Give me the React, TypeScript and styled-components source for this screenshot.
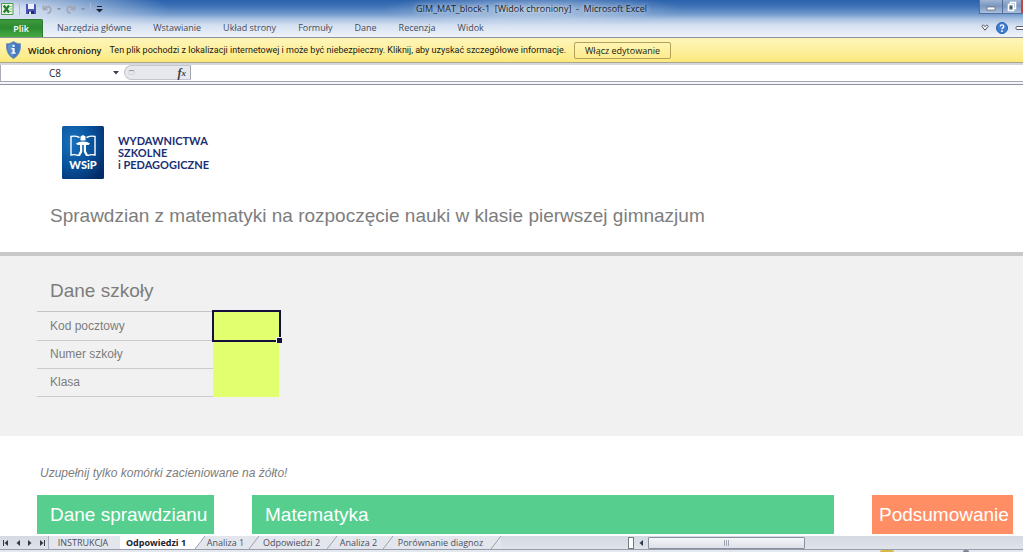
import React from "react";
import styled, { createGlobalStyle } from "styled-components";

const GlobalStyle = createGlobalStyle`
  * { box-sizing: border-box; }
  body { margin: 0; background: #fff; }
  button, input { font: inherit; color: inherit; margin: 0; }
  button { cursor: pointer; }
`;

const uiFont = `"Open Sans", "Noto Sans", sans-serif`;
const messageFont = `Roboto, "Noto Sans", sans-serif`;
const sheetFont = `"Liberation Sans", Arial, sans-serif`;

const Window = styled.div`
  display: flex;
  flex-direction: column;
  min-height: 100vh;
  overflow: hidden;
  font-family: ${uiFont};
  font-size: 9px;
  color: #1e1e28;
`;

/* Window frame */
const Frame = styled.header`
  background:
    radial-gradient(ellipse 150px 16px at 52% 9px, rgba(255, 255, 255, 0.5), rgba(255, 255, 255, 0)),
    radial-gradient(ellipse 170px 30px at 0 10px, rgba(240, 244, 250, 0.95), rgba(240, 244, 250, 0)),
    linear-gradient(#2b62ad 0, #3d71b5 6px, #7098cb 14px, #a9c1e2 19px, #d3dff0 25px, #edf2f9 36px);
  border-bottom: 1px solid #8d919c;
`;
const TitleBar = styled.div`
  display: grid;
  grid-template-columns: 1fr auto 1fr;
  height: 18px;
`;
const QuickAccess = styled.div`
  display: flex;
  align-items: center;
  gap: 5px;
  padding-left: 1px;
`;
const IconButton = styled.button`
  display: flex;
  align-items: center;
  justify-content: center;
  flex: none;
  padding: 0;
  border: 0;
  background: none;
`;
const Separator = styled.span`
  width: 1px;
  height: 12px;
  background: #a9bad2;
`;
const DocumentTitle = styled.h1`
  margin: 0;
  padding-left: 40px;
  font-size: 9px;
  font-weight: 400;
  line-height: 18px;
  white-space: pre;
  text-shadow: 0 0 5px #fff;
`;
const WindowButtons = styled.div`
  display: flex;
  justify-content: flex-end;
  height: 14px;
`;
const WindowButton = styled(IconButton)<{ $width: number; $close?: boolean }>`
  width: ${(p) => p.$width}px;
  height: 14px;
  border: 1px solid #526f9b;
  border-top: 0;
  border-right: 0;
  background: ${(p) => (p.$close ? "#c1453e" : "linear-gradient(#9fb5d3, #7b97be 45%, #a9bfdc)")};
`;
const RibbonTabs = styled.nav`
  display: flex;
  align-items: center;
  height: 19px;
  color: #454b58;
`;
const FileTab = styled.button`
  width: 43px;
  height: 18px;
  margin-right: 14px;
  align-self: flex-end;
  padding: 0;
  border: 1px solid #2c7a30;
  border-left: 0;
  border-bottom: 0;
  border-radius: 0 2px 0 0;
  background: linear-gradient(#3f9a3c, #2c8a31 45%, #46ab42);
  color: #fff;
  font-weight: 600;
`;
const RibbonTab = styled.button`
  padding: 0;
  margin-right: 22px;
  border: 0;
  background: none;
  line-height: 18px;
  white-space: nowrap;
`;
const RibbonTools = styled.div`
  display: flex;
  align-items: center;
  gap: 7px;
  margin-left: auto;
`;

/* Protected view message */
const MessageBar = styled.section`
  display: flex;
  align-items: center;
  height: 25px;
  padding-left: 6px;
  background: linear-gradient(#fff5b8, #fdf0a0 50%, #fbe97c);
  border-bottom: 1px solid #a9a68c;
  color: #1c1a10;
  white-space: nowrap;
`;
const MessageTitle = styled.strong`
  margin: 0 8px 0 7px;
  font-weight: 600;
`;
const MessageText = styled.span`
  font-family: ${messageFont};
`;
const EnableButton = styled.button`
  width: 97px;
  height: 17px;
  margin-left: 8px;
  padding: 0;
  border: 1px solid #b5a05a;
  border-radius: 2px;
  background: linear-gradient(#fff4b4, #fcec8d);
`;

/* Formula bar */
const FormulaBar = styled.section`
  display: flex;
  height: 22px;
  padding: 2px 0 3px;
  border-bottom: 1px solid #8e929c;
  background: linear-gradient(#d5d7dc 0 2px, #fff 2px 18px, #a3a7b0 18px 19px, #f4f5f7 19px);
`;
const NameBox = styled.div`
  display: flex;
  align-items: center;
  width: 124px;
  border-left: 1px solid #a9adb5;
`;
const NameInput = styled.input`
  width: 108px;
  padding: 0;
  border: 0;
  outline: 0;
  background: none;
  font-size: 10px;
  text-align: center;
`;
const NameList = styled(IconButton)`
  margin-left: 4px;
`;
const FunctionArea = styled.div`
  display: flex;
  align-items: center;
  justify-content: space-between;
  width: 67px;
  margin-bottom: 1px;
  padding: 0 4px 0 3px;
  border: 1px solid #c3c7cf;
  border-right-color: #9fa4ad;
  border-radius: 8px 0 0 8px;
  background: #e6e8ed;
`;
const Grip = styled.span`
  width: 7px;
  height: 5px;
  border: 1px solid #d4d7dd;
  border-top-color: #8f949e;
  border-radius: 3px;
`;
const FunctionButton = styled(IconButton)`
  font-family: "Liberation Serif", serif;
  font-size: 12px;
  font-style: italic;
  font-weight: 700;
  line-height: 12px;
  color: #3a3d46;
`;
const FunctionSub = styled.span`
  font-size: 9px;
`;
const FormulaInput = styled.input`
  flex: 1;
  min-width: 0;
  padding: 0 4px;
  border: 0;
  outline: 0;
  background: none;
`;

/* Worksheet */
const Sheet = styled.main`
  flex: 1;
  background: #fff;
  font-family: ${sheetFont};
  color: #7d7d7d;
`;
const Masthead = styled.section`
  padding: 41px 50px 0;
  height: 171px;
  border-bottom: 4px solid #c9c9c9;
`;
const Brand = styled.div`
  display: flex;
  align-items: center;
  gap: 14px;
  height: 53px;
  padding-left: 12px;
`;
const BrandName = styled.p`
  margin: 0;
  font-family: Lato, sans-serif;
  font-size: 11px;
  font-weight: 700;
  line-height: 12px;
  color: #1b2f73;
`;
const SheetTitle = styled.h2`
  margin: 26px 0 0;
  font-size: 19px;
  font-weight: 400;
  line-height: 22px;
`;
const SchoolSection = styled.section`
  height: 180px;
  padding: 23px 37px 0;
  background: #f1f1f1;
`;
const SchoolHeading = styled.h3`
  margin: 0 0 8px 13px;
  font-size: 19px;
  font-weight: 400;
  line-height: 24px;
`;
const SchoolTable = styled.table`
  border-collapse: separate;
  border-spacing: 0;
  width: 242px;
  table-layout: fixed;
`;
const LabelCell = styled.th<{ $first: boolean }>`
  width: 176px;
  height: ${(p) => (p.$first ? 30 : 28)}px;
  padding: 0 0 0 13px;
  border-top: ${(p) => (p.$first ? "1px solid #c4c4c4" : "0")};
  border-bottom: 1px solid #cbcbcb;
  font-size: 12px;
  font-weight: 400;
  line-height: 27px;
  text-align: left;
`;
const ValueCell = styled.td`
  position: relative;
  padding: 0;
  background: #e2ff70;
`;
const CellInput = styled.input`
  display: block;
  width: 100%;
  height: 28px;
  padding: 0 4px;
  border: 0;
  outline: 0;
  background: none;
  font-size: 12px;
`;
const Selection = styled.span`
  position: absolute;
  z-index: 1;
  inset: -1px -2px -1px -1px;
  border: 2px solid #160f3d;
  pointer-events: none;
  &::after {
    content: "";
    position: absolute;
    right: -3px;
    bottom: -3px;
    width: 5px;
    height: 5px;
    border: solid #f1f1f1;
    border-width: 1px 0 0 1px;
    background: #160f3d;
  }
`;
const Hint = styled.p`
  margin: 0;
  padding: 28px 40px 13px;
  font-size: 12px;
  font-style: italic;
  line-height: 18px;
`;
const Blocks = styled.div`
  display: grid;
  grid-template-columns: 177px 1fr 141px;
  column-gap: 38px;
  padding: 0 10px 2px 37px;
`;
const Block = styled.h3<{ $color: string; $inset: number }>`
  margin: 0;
  padding-left: ${(p) => p.$inset}px;
  background: ${(p) => p.$color};
  color: #fff;
  font-size: 19px;
  font-weight: 400;
  line-height: 39px;
  white-space: nowrap;
`;

/* Sheet tabs and scroll bar */
const TabStrip = styled.footer`
  display: flex;
  height: 13px;
  background: linear-gradient(#d5dae2, #dfe3ea);
  border-bottom: 1px solid #979dab;
  box-sizing: content-box;
  color: #4b5060;
`;
const Navigation = styled.div`
  display: flex;
  align-items: center;
  justify-content: space-around;
  width: 49px;
  border-right: 1px solid #a7adb9;
`;
const SheetTab = styled.button<{ $width: number; $active?: boolean }>`
  width: ${(p) => p.$width}px;
  padding: 0 3px 0 0;
  border: 0;
  background: ${(p) => (p.$active ? "#fff" : "#e3e6ec")};
  color: ${(p) => (p.$active ? "#22242e" : "inherit")};
  font-weight: ${(p) => (p.$active ? 700 : 400)};
  line-height: 13px;
  white-space: nowrap;
`;
const ScrollArea = styled.div`
  display: flex;
  align-items: center;
  gap: 4px;
  width: 395px;
  margin-left: auto;
`;
const Splitter = styled.span`
  width: 6px;
  height: 12px;
  border: 1px solid #737987;
  background: #fff;
`;
const ScrollThumb = styled.button`
  display: flex;
  align-items: center;
  justify-content: center;
  gap: 1px;
  width: 157px;
  height: 12px;
  padding: 0;
  border: 1px solid #8a90a0;
  border-radius: 1px;
  background: linear-gradient(#f5f6f9, #dde0e8);
`;
const ThumbLine = styled.span`
  width: 1px;
  height: 6px;
  background: #a0a5b2;
`;
const StatusBar = styled.div`
  display: flex;
  height: 2px;
  padding-left: 86%;
  gap: 69px;
  background: #e4e8ef;
`;
const StatusMark = styled.span<{ $width: number; $color: string }>`
  width: ${(p) => p.$width}px;
  background: ${(p) => p.$color};
  border-radius: 2px 2px 0 0;
`;

const ExcelIcon = () => (
  <svg width="13" height="14" viewBox="0 0 13 14">
    <path d="M.5 1.500h11.500v11H.5z" fill="#eaf5e5" stroke="#4d9a50" />
    <path d="M8.500 4.500h2.500M8.500 7h2.500M8.500 9.500h2.500" stroke="#8fc48f" />
    <path d="M2.800 3.500l5.200 7M8 3.500l-5.200 7" stroke="#1f7d2c" strokeWidth="2.200" />
  </svg>
);
const SaveIcon = () => (
  <svg width="12" height="12" viewBox="0 0 12 12">
    <path d="M1 1h9l1 1v9H1z" fill="#4a55b8" />
    <path d="M3 1h6v5H3z" fill="#eef2fb" />
    <path d="M3 8h6v3H3z" fill="#272d68" />
    <path d="M4 8.500h2V11H4z" fill="#e7e9f5" />
  </svg>
);
const UndoIcon = ({ flip }: { flip?: boolean }) => (
  <svg width="10" height="11" viewBox="0 0 10 11">
    <g transform={flip ? "translate(10 0) scale(-1 1)" : undefined} fill="none" stroke="#a3a5b0" strokeWidth="1.700">
      <path d="M2 5L4.200 3Q8.800 1.800 8.800 5.500 8.800 8.500 5.500 9.500" />
      <path d="M1.500 1.500v3.800h4" />
    </g>
  </svg>
);
const Arrow = ({ color = "#3a3f4a" }: { color?: string }) => (
  <svg width="6" height="4" viewBox="0 0 6 4">
    <path d="M0 0h6L3 3.500z" fill={color} />
  </svg>
);
const SmallArrow = () => (
  <svg width="4" height="3" viewBox="0 0 4 3">
    <path d="M0 0h4L2 2.500z" fill="#8790a3" />
  </svg>
);
const CustomizeIcon = () => (
  <svg width="7" height="8" viewBox="0 0 7 8">
    <path d="M1 1.500h5" stroke="#20242e" />
    <path d="M0 4h7L3.500 7.500z" fill="#20242e" />
  </svg>
);
const ShieldIcon = () => (
  <svg width="15" height="18" viewBox="0 0 15 18">
    <path d="M7.500.5C9.500 2 12 2.800 14.500 2.800 14.800 9.500 13 14.500 7.500 17.500 2 14.500.2 9.500.5 2.800 3 2.800 5.500 2 7.500.5z" fill="#4279be" stroke="#7890ae" />
    <path d="M7.500 2v14.300C3 13.500 1.700 9 1.800 4c2-.1 4-.8 5.700-2z" fill="#5b8fcf" />
    <path d="M6.600 3.800h2v2h-2z" fill="#fff" />
    <path d="M5.500 7h3.100v4.600h1.100v1.200H5.500v-1.200h1.100V8.200H5.500z" fill="#fff" />
  </svg>
);
const HeartIcon = () => (
  <svg width="8" height="8" viewBox="0 0 8 8">
    <path d="M1 2.500Q1 1 2.500 1.200L4 2.500 5.500 1.200Q7 1 7 2.500L4 6.200z" fill="#fff" stroke="#4a4f5c" />
  </svg>
);
const HelpIcon = () => (
  <svg width="12" height="12" viewBox="0 0 12 12">
    <circle cx="6" cy="6" r="5.500" fill="#3f7ed0" stroke="#2a5fae" />
    <path d="M4.200 4.500Q4.300 2.800 6 2.800T7.800 4.400Q7.800 5.300 6.800 5.900T6 7.400" fill="none" stroke="#fff" strokeWidth="1.300" />
    <circle cx="6" cy="9.200" r="0.900" fill="#fff" />
  </svg>
);
const MinimizeIcon = () => (
  <svg width="10" height="10" viewBox="0 0 10 10">
    <rect x="1" y="5" width="8" height="3" fill="#fff" stroke="#59616f" strokeWidth="0.700" />
  </svg>
);
const RestoreIcon = () => (
  <svg width="10" height="11" viewBox="0 0 10 11">
    <path d="M3.500 1.500h5v6h-5z" fill="none" stroke="#fff" strokeWidth="1.500" />
    <path d="M1.500 3.500h5v6h-5z" fill="#76869e" stroke="#fff" strokeWidth="1.600" />
    <path d="M3 5.500h2v2H3z" fill="#3f4a5d" />
  </svg>
);
const RibbonWindowIcon = () => (
  <svg width="8" height="6" viewBox="0 0 8 6">
    <path d="M9 1.500H2Q1 1.500 1 2.500v1q0 1 1 1h7" fill="#fff" stroke="#5a606d" />
  </svg>
);
const NavIcon = ({ end, flip }: { end?: boolean; flip?: boolean }) => (
  <svg width="6" height="6" viewBox="0 0 6 6">
    <g transform={flip ? "translate(6 0) scale(-1 1)" : undefined} fill="#343947">
      <path d="M5 0v6L1.500 3z" />
      {end && <path d="M0 0h1v6H0z" />}
    </g>
  </svg>
);
const Slant = ({ left }: { left?: string }) => (
  <svg width="10" height="13" viewBox="0 0 10 13">
    <path d="M0 0h10v13H0z" fill="#e3e6ec" />
    <path d="M0 0h10L0 13z" fill={left ?? "#e3e6ec"} />
    <path d="M10 0L0 13" stroke="#9aa0ae" />
  </svg>
);
const WsipLogo = () => (
  <svg width="42" height="53" viewBox="0 0 42 53" role="img" aria-label="WSiP">
    <defs>
      <radialGradient id="wsip" cx="0.25" cy="0.3" r="0.9">
        <stop offset="0" stopColor="#1a72bc" />
        <stop offset="0.55" stopColor="#07509a" />
        <stop offset="1" stopColor="#042c66" />
      </radialGradient>
    </defs>
    <rect width="42" height="53" rx="1.500" fill="url(#wsip)" />
    <g fill="none" stroke="#fff" strokeWidth="1.400">
      <path d="M17.500 11.500Q13 9.500 9 10.500V29Q13 28 16 29.500" />
      <path d="M24.500 11.500Q29 9.500 33 10.500V29Q29 28 26 29.500" />
    </g>
    <path d="M18.500 10.500L21 9l2.500 1.500v4h-5z" fill="#fff" />
    <path d="M14 17.500Q16.500 15.500 21 15.500T28 17.500L26.500 19H15.500z" fill="#fff" />
    <path d="M18 19h2.200v7L18 30h-2.500l2.500-5zM24 19h-2.200v7L24 30h2.500L24 25z" fill="#fff" />
    <text x="21" y="43" textAnchor="middle" fill="#fff" fontFamily="Lato, sans-serif" fontSize="11" fontWeight="900">WSiP</text>
  </svg>
);

const ribbonTabs = ["Narzędzia główne", "Wstawianie", "Układ strony", "Formuły", "Dane", "Recenzja", "Widok"];
const schoolFields = [
  { id: "postcode", label: "Kod pocztowy" },
  { id: "number", label: "Numer szkoły" },
  { id: "class", label: "Klasa" },
];
const sheetTabs = [
  { name: "Analiza 1", width: 44 },
  { name: "Odpowiedzi 2", width: 68 },
  { name: "Analiza 2", width: 46 },
  { name: "Porównanie diagnoz", width: 98 },
];

export default function App() {
  return (
    <Window>
      <GlobalStyle />
      <Frame>
        <TitleBar>
          <QuickAccess>
            <ExcelIcon />
            <Separator />
            <IconButton aria-label="Zapisz"><SaveIcon /></IconButton>
            <IconButton aria-label="Cofnij"><UndoIcon /></IconButton>
            <SmallArrow />
            <IconButton aria-label="Ponów"><UndoIcon flip /></IconButton>
            <SmallArrow />
            <Separator />
            <IconButton aria-label="Dostosuj"><CustomizeIcon /></IconButton>
          </QuickAccess>
          <DocumentTitle>{"GIM_MAT_block-1  [Widok chroniony]  -  Microsoft Excel"}</DocumentTitle>
          <WindowButtons>
            <WindowButton $width={23} aria-label="Minimalizuj"><MinimizeIcon /></WindowButton>
            <WindowButton $width={19} aria-label="Przywróć"><RestoreIcon /></WindowButton>
            <WindowButton $width={2} $close aria-label="Zamknij" />
          </WindowButtons>
        </TitleBar>
        <RibbonTabs>
          <FileTab>Plik</FileTab>
          {ribbonTabs.map((name) => <RibbonTab key={name}>{name}</RibbonTab>)}
          <RibbonTools>
            <IconButton aria-label="Minimalizuj wstążkę"><HeartIcon /></IconButton>
            <IconButton aria-label="Pomoc"><HelpIcon /></IconButton>
            <IconButton aria-label="Minimalizuj okno"><RibbonWindowIcon /></IconButton>
          </RibbonTools>
        </RibbonTabs>
      </Frame>

      <MessageBar>
        <ShieldIcon />
        <MessageTitle>Widok chroniony</MessageTitle>
        <MessageText>Ten plik pochodzi z lokalizacji internetowej i może być niebezpieczny. Kliknij, aby uzyskać szczegółowe informacje.</MessageText>
        <EnableButton>Włącz edytowanie</EnableButton>
      </MessageBar>

      <FormulaBar>
        <NameBox>
          <NameInput aria-label="Pole nazwy" defaultValue="C8" />
          <NameList aria-label="Lista nazw"><Arrow /></NameList>
        </NameBox>
        <FunctionArea>
          <Grip />
          <FunctionButton aria-label="Wstaw funkcję">f<FunctionSub>x</FunctionSub></FunctionButton>
        </FunctionArea>
        <FormulaInput aria-label="Pasek formuły" />
      </FormulaBar>

      <Sheet>
        <Masthead>
          <Brand>
            <WsipLogo />
            <BrandName>WYDAWNICTWA<br />SZKOLNE<br />i PEDAGOGICZNE</BrandName>
          </Brand>
          <SheetTitle>Sprawdzian z matematyki na rozpoczęcie nauki w klasie pierwszej gimnazjum</SheetTitle>
        </Masthead>
        <SchoolSection>
          <SchoolHeading>Dane szkoły</SchoolHeading>
          <SchoolTable>
            <tbody>
              {schoolFields.map((field, index) => (
                <tr key={field.id}>
                  <LabelCell scope="row" $first={index === 0}><label htmlFor={field.id}>{field.label}</label></LabelCell>
                  <ValueCell>
                    <CellInput id={field.id} />
                    {index === 0 && <Selection />}
                  </ValueCell>
                </tr>
              ))}
            </tbody>
          </SchoolTable>
        </SchoolSection>
        <Hint>Uzupełnij tylko komórki zacieniowane na żółto!</Hint>
        <Blocks>
          <Block $color="#55ce8e" $inset={13}>Dane sprawdzianu</Block>
          <Block $color="#55ce8e" $inset={13}>Matematyka</Block>
          <Block $color="#ff8e64" $inset={7}>Podsumowanie</Block>
        </Blocks>
      </Sheet>

      <TabStrip>
        <Navigation>
          <IconButton aria-label="Pierwszy arkusz"><NavIcon end /></IconButton>
          <IconButton aria-label="Poprzedni arkusz"><NavIcon /></IconButton>
          <IconButton aria-label="Następny arkusz"><NavIcon flip /></IconButton>
          <IconButton aria-label="Ostatni arkusz"><NavIcon end flip /></IconButton>
        </Navigation>
        <SheetTab $width={71}>INSTRUKCJA</SheetTab>
        <SheetTab $width={75} $active>Odpowiedzi 1</SheetTab>
        <Slant left="#fff" />
        {sheetTabs.map((tab) => (
          <React.Fragment key={tab.name}>
            <SheetTab $width={tab.width}>{tab.name}</SheetTab>
            <Slant />
          </React.Fragment>
        ))}
        <ScrollArea>
          <Splitter />
          <IconButton aria-label="Przewiń w lewo"><NavIcon /></IconButton>
          <ScrollThumb aria-label="Pasek przewijania"><ThumbLine /><ThumbLine /><ThumbLine /></ScrollThumb>
        </ScrollArea>
      </TabStrip>
      <StatusBar>
        <StatusMark $width={14} $color="#d9b84a" />
        <StatusMark $width={6} $color="#7e8492" />
      </StatusBar>
    </Window>
  );
}
